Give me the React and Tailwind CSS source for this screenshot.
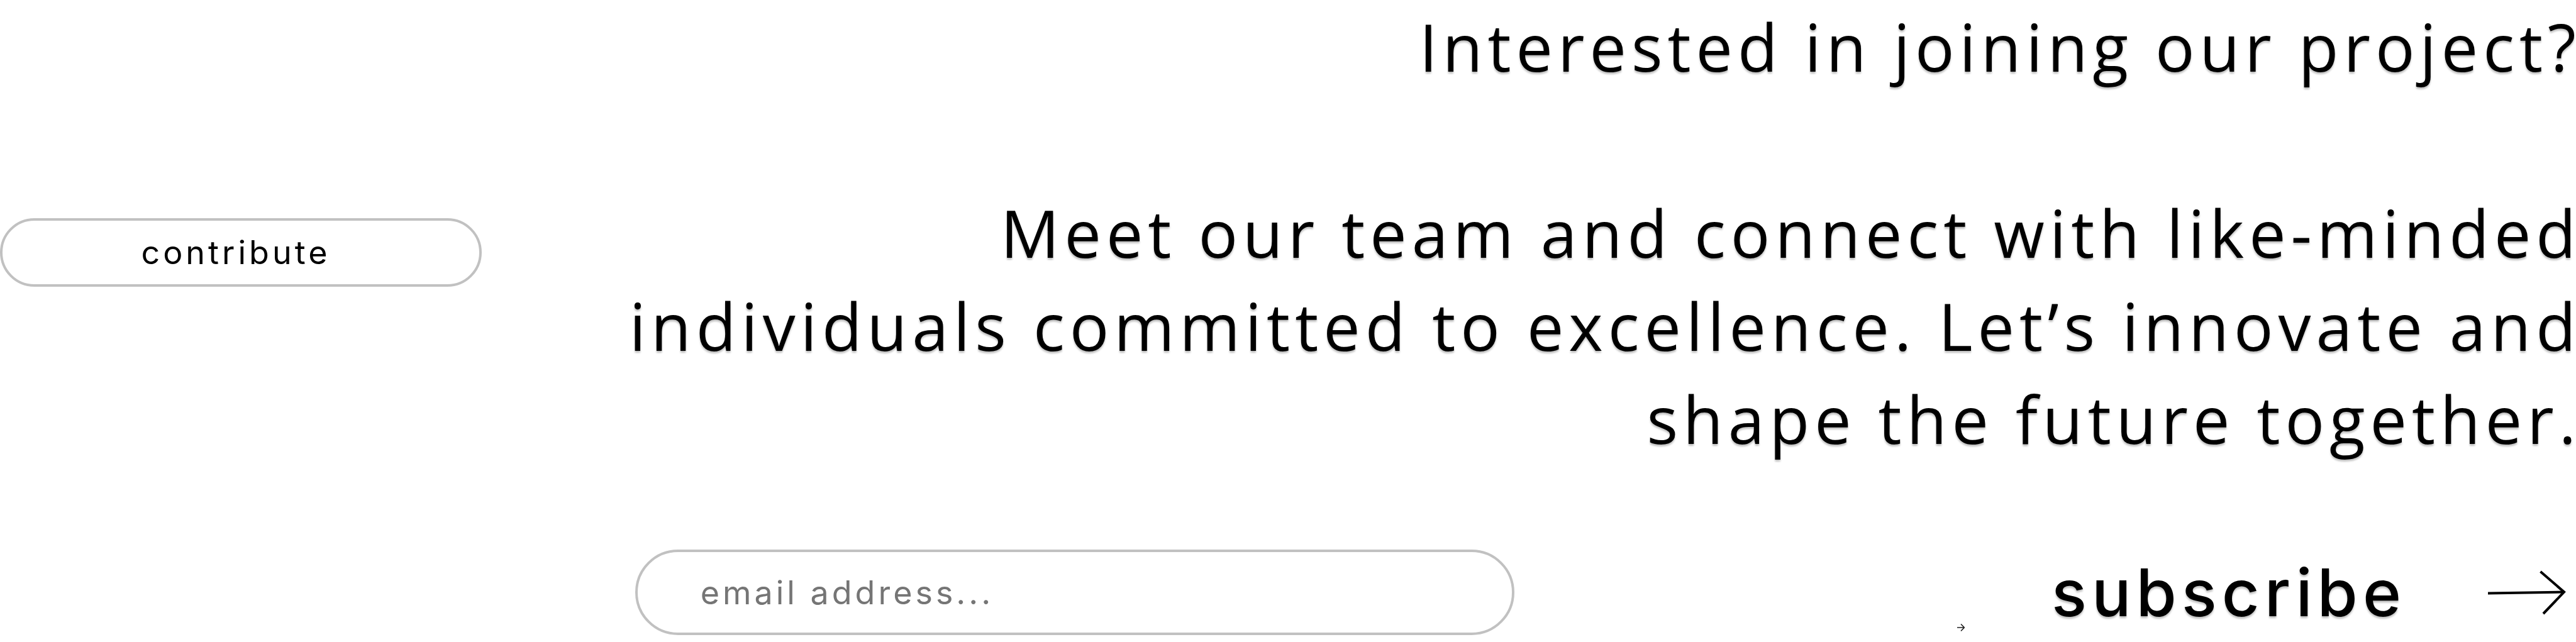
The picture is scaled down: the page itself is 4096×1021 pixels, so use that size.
function LongArrow() {
  return (
    <svg className="h-[72px] w-[126px] shrink-0" viewBox="0 0 126 72" fill="none" stroke="#000" strokeWidth="4" aria-hidden="true">
      <path d="M2 37.5 L123 35.5" />
      <path d="M85.5 3 L123 35.5 L90 70" strokeLinejoin="miter" />
    </svg>
  );
}

function SmallArrow() {
  return (
    <svg className="mb-1 ml-auto h-4 w-3 shrink-0 self-end" viewBox="0 0 12 16" fill="none" stroke="#222" strokeWidth="1.6" aria-hidden="true">
      <path d="M0 8 H11 M6 2.5 L11.3 8 L6 13.5" />
    </svg>
  );
}

export default function App() {
  return (
    <main className="flex min-h-screen w-full items-start justify-between overflow-hidden bg-white text-black">
      <button
        type="button"
        className="mt-[347px] h-[109px] w-[18.7%] rounded-full border-4 border-[#c1c1c1] pr-4 font-['Inter',sans-serif] text-[52px] leading-none tracking-[5px]"
      >
        contribute
      </button>

      <section className="w-[75.35%]">
        <div className="-mr-2 -ml-10 text-right font-['Open_Sans',sans-serif] text-[104px] leading-[148px] tracking-[8px] [text-shadow:0_3px_3px_rgba(0,0,0,0.25)]">
          <h2>Interested in joining our project?</h2>
          <p className="mt-[148px]">
            Meet our team and connect with like-minded individuals committed to excellence. Let’s innovate and shape the future together.
          </p>
        </div>

        <form className="mt-[134px] flex items-center font-['Inter',sans-serif]" onSubmit={(e) => e.preventDefault()}>
          <input
            type="email"
            aria-label="email address"
            placeholder="email address..."
            className="h-[136px] w-[45.3%] rounded-full border-4 border-[#c1c1c1] pr-10 pl-[100px] text-[52px] tracking-[5px] outline-none placeholder:text-[#757575]"
          />
          <SmallArrow />
          <button type="submit" className="mr-4 ml-[138px] flex items-center gap-[128px] text-[104px] leading-none font-medium tracking-[8px] [text-shadow:0_3px_3px_rgba(0,0,0,0.25)]">
            subscribe
            <LongArrow />
          </button>
        </form>
      </section>
    </main>
  );
}
